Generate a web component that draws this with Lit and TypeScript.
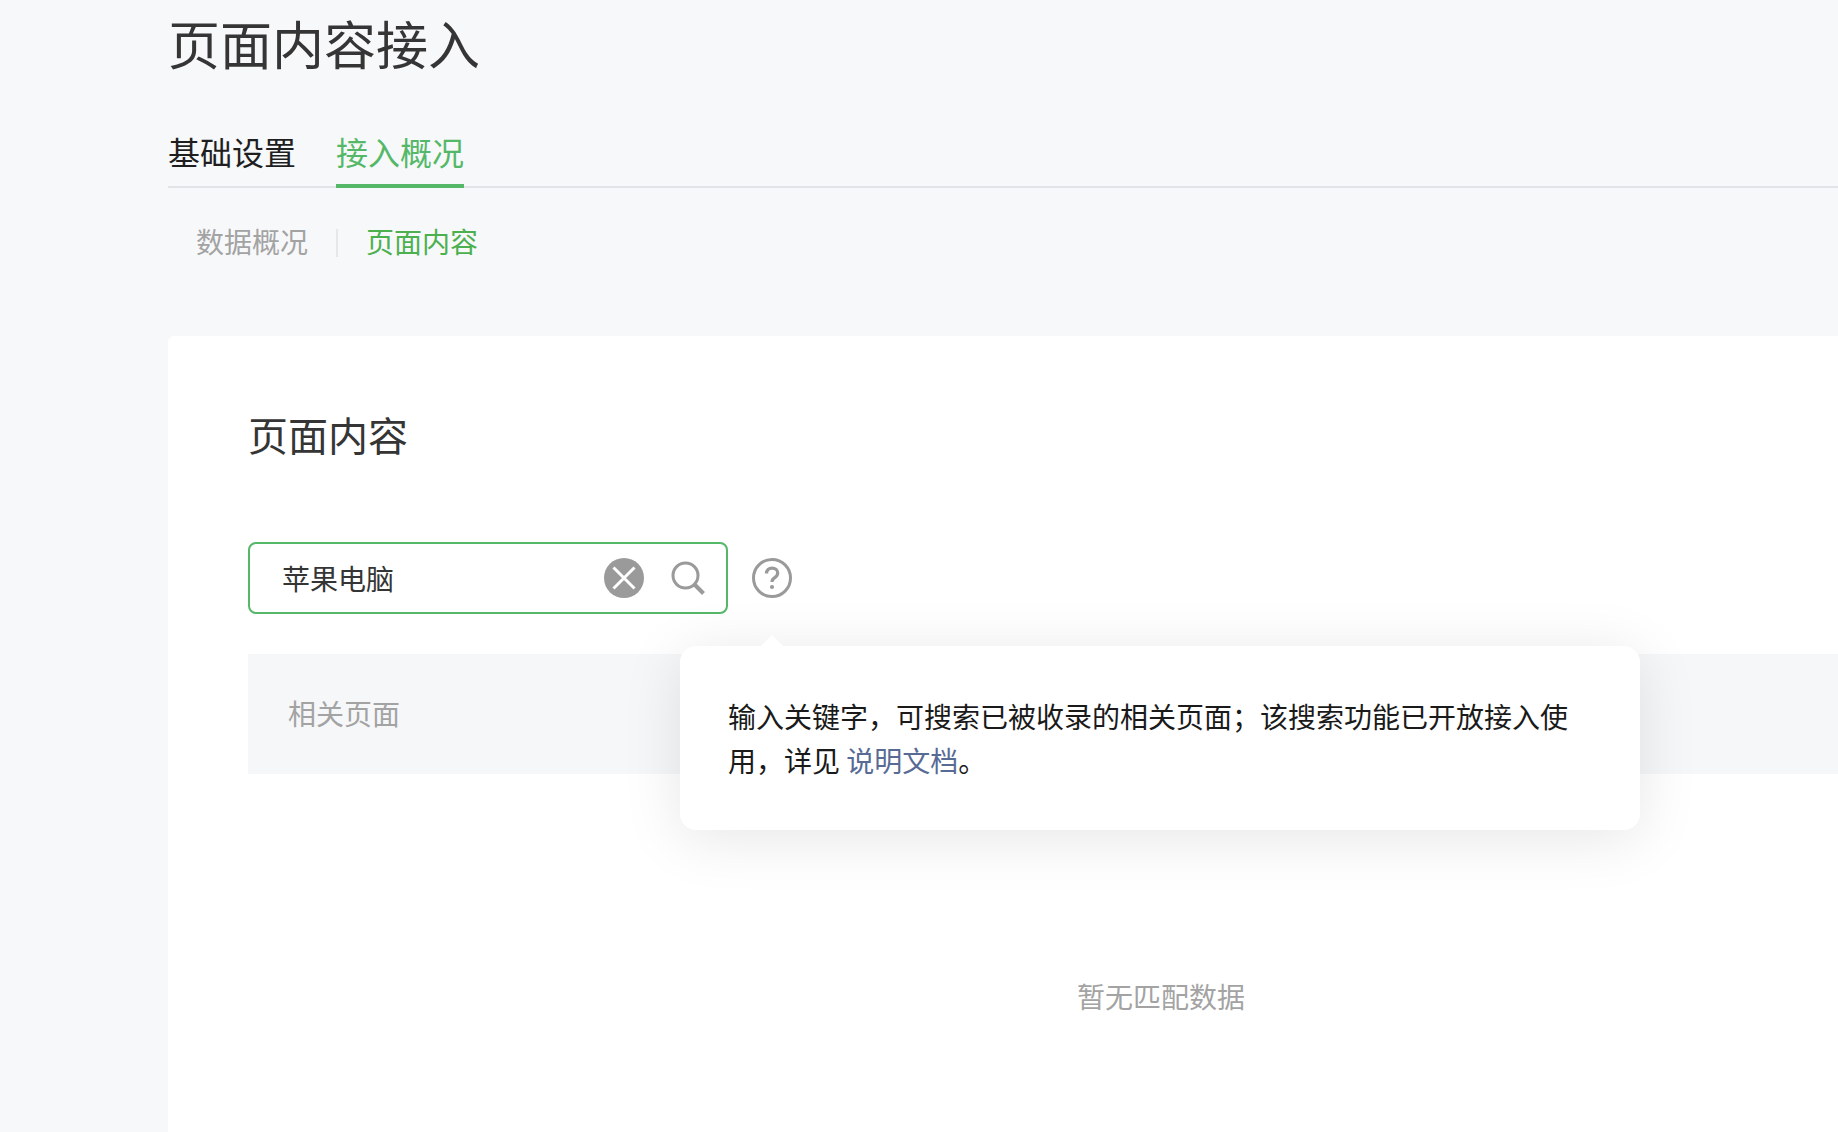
import { LitElement, html, css } from "lit";
import { customElement } from "lit/decorators.js";

@customElement("app-root")
export class AppRoot extends LitElement {
  static styles = css`
    :host {
      display: block;
      width: 100vw;
      height: 100vh;
      overflow: hidden;
      background: #f7f8fa;
      font-family: "Noto Sans CJK SC", "Liberation Sans", sans-serif;
      color: #353535;
    }
    .page {
      width: 1986px;
      margin-left: 168px;
      padding-top: 7px;
    }
    .title {
      margin: 0;
      font-size: 52px;
      line-height: 72px;
      font-weight: 400;
      color: #353535;
    }
    .tabs {
      display: flex;
      gap: 40px;
      margin-top: 50px;
      border-bottom: 2px solid #e1e3e6;
    }
    .tab {
      font-size: 32px;
      line-height: 44px;
      padding-bottom: 11px;
      margin-bottom: -2px;
      border-bottom: 4px solid transparent;
      color: #1f1f1f;
    }
    .tab.active {
      color: #55b868;
      border-bottom-color: #55b868;
    }
    .subnav {
      display: flex;
      align-items: center;
      gap: 28px;
      margin-top: 33px;
      padding-left: 28px;
      font-size: 28px;
      line-height: 40px;
      color: #a3a3a3;
    }
    .sep {
      width: 2px;
      height: 28px;
      margin-top: 4px;
      background: #e6e7e9;
    }
    .subnav .active {
      color: #4cb04f;
    }
    .card {
      position: relative;
      margin-top: 75px;
      padding: 70px 80px 0;
      min-height: 1000px;
      background: #fff;
      border-radius: 6px;
    }
    .card-title {
      margin: 0;
      font-size: 40px;
      line-height: 56px;
      font-weight: 400;
      color: #353535;
    }
    .search-row {
      display: flex;
      align-items: center;
      margin-top: 80px;
    }
    .search {
      box-sizing: border-box;
      display: flex;
      align-items: center;
      width: 480px;
      height: 72px;
      padding: 0 21px 0 32px;
      border: 2px solid #55b868;
      border-radius: 8px;
      font-size: 28px;
      color: #353535;
    }
    .search .value {
      flex: 1;
    }
    .icon {
      display: block;
      flex: none;
    }
    .clear {
      margin-right: 27px;
    }
    .help {
      margin-left: 24px;
    }
    .head {
      display: flex;
      align-items: center;
      height: 120px;
      box-sizing: border-box;
      padding-bottom: 2px;
      margin-top: 40px;
      padding-left: 40px;
      background: #f6f7f9;
      font-size: 28px;
      color: #a3a3a3;
    }
    .empty {
      display: flex;
      align-items: center;
      justify-content: center;
      height: 444px;
      font-size: 28px;
      color: #a3a3a3;
    }
    .pop {
      position: absolute;
      left: 512px;
      top: 310px;
      box-sizing: border-box;
      width: 960px;
      height: 184px;
      padding: 48px;
      background: #fff;
      border-radius: 16px;
      box-shadow: 0 8px 60px rgba(0, 0, 0, 0.1);
      font-size: 28px;
      line-height: 44px;
      color: #1a1a1a;
    }
    .arrow {
      position: absolute;
      left: 80px;
      top: -11px;
      width: 24px;
      height: 12px;
      display: block;
    }
    .pop a {
      color: #576b95;
      text-decoration: none;
    }
  `;

  render() {
    return html`
      <div class="page">
        <h1 class="title">页面内容接入</h1>
        <div class="tabs">
          <div class="tab">基础设置</div>
          <div class="tab active">接入概况</div>
        </div>
        <div class="subnav">
          <span>数据概况</span>
          <span class="sep"></span>
          <span class="active">页面内容</span>
        </div>
        <div class="card">
          <h2 class="card-title">页面内容</h2>
          <div class="search-row">
            <div class="search">
              <span class="value">苹果电脑</span>
              <svg class="icon clear" width="40" height="40" viewBox="0 0 40 40">
                <circle cx="20" cy="20" r="20" fill="#9a9a9a"></circle>
                <path d="M9.5 9.5 30.5 30.5M30.5 9.5 9.5 30.5" stroke="#fff" stroke-width="3" fill="none"></path>
              </svg>
              <svg class="icon" width="34" height="34" viewBox="0 0 34 34">
                <circle cx="14.5" cy="14.5" r="12.5" stroke="#9a9a9a" stroke-width="3" fill="none"></circle>
                <path d="M24 24 32.5 32.5" stroke="#9a9a9a" stroke-width="4" fill="none"></path>
              </svg>
            </div>
            <svg class="icon help" width="40" height="40" viewBox="0 0 40 40">
              <circle cx="20" cy="20" r="18.5" stroke="#9a9a9a" stroke-width="3" fill="none"></circle>
              <path d="M14.5 15.5c0-3.4 2.4-5.4 5.6-5.4s5.6 2 5.6 4.9c0 2.3-1.2 3.4-3 4.6-1.9 1.2-2.7 2.2-2.7 4.4" stroke="#9a9a9a" stroke-width="3.2" fill="none"></path>
              <circle cx="20" cy="29" r="2.1" fill="#9a9a9a"></circle>
            </svg>
          </div>
          <div class="head">相关页面</div>
          <div class="empty">暂无匹配数据</div>
          <div class="pop">
            <svg class="arrow" viewBox="0 0 24 12"><path d="M0 12 12 0 24 12Z" fill="#fff"></path></svg>
            输入关键字，可搜索已被收录的相关页面；该搜索功能已开放接入使用，详见 <a>说明文档</a>。
          </div>
        </div>
      </div>
    `;
  }
}
